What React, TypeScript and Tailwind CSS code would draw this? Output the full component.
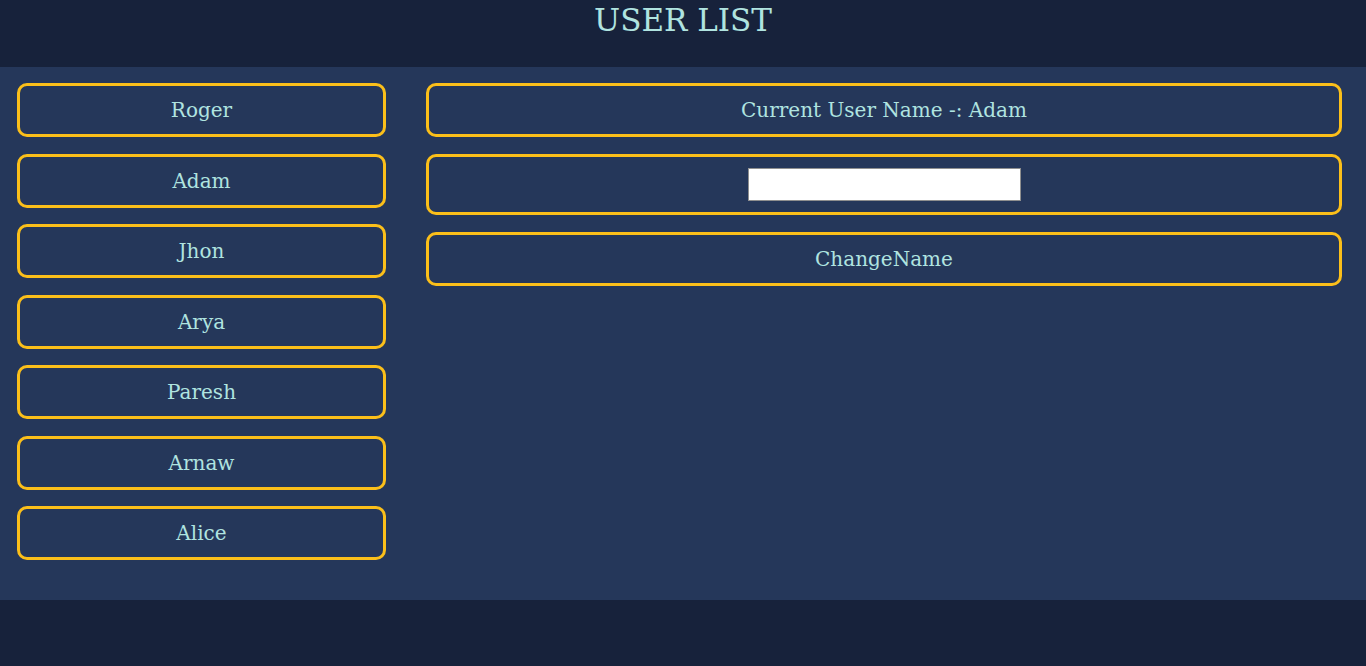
import React, { useState } from 'react';

const users = ['Roger', 'Adam', 'Jhon', 'Arya', 'Paresh', 'Arnaw', 'Alice'];

const boxClass =
  'w-full h-[54px] flex items-center justify-center border-[3px] border-[#fbbf1a] rounded-[10px] text-[20px] text-[#b0e4e0]';

const App: React.FC = () => {
  const [current, setCurrent] = useState('Adam');
  const [name, setName] = useState('');

  return (
    <div className="min-h-[666px] bg-[#17223b] font-['DejaVu_Serif',Georgia,serif]">
      {/* Header */}
      <header className="h-[67px] bg-[#17223b] flex justify-center">
        <h1 className="text-[31px] leading-[40px] text-[#b0e4e0]">USER LIST</h1>
      </header>

      {/* Main */}
      <main className="h-[533px] bg-[#25375a] flex pl-[17px] pr-[24px] pt-4 gap-[40px]">
        <div className="w-[369px] flex flex-col gap-[16.5px]">
          {users.map((u) => (
            <button key={u} className={boxClass} onClick={() => setCurrent(u)}>
              {u}
            </button>
          ))}
        </div>

        <div className="flex-1 flex flex-col gap-[17px]">
          <div className={boxClass}>Current User Name -: {current}</div>
          <div className="w-full h-[61px] flex items-center justify-center border-[3px] border-[#fbbf1a] rounded-[10px]">
            <input
              value={name}
              onChange={(e) => setName(e.target.value)}
              className="w-[273px] h-[33px] bg-white border border-[#8f8f8f] outline-none px-1 text-black"
            />
          </div>
          <button
            className={boxClass}
            onClick={() => {
              if (name.trim()) setCurrent(name.trim());
            }}
          >
            ChangeName
          </button>
        </div>
      </main>
    </div>
  );
};

export default App;
